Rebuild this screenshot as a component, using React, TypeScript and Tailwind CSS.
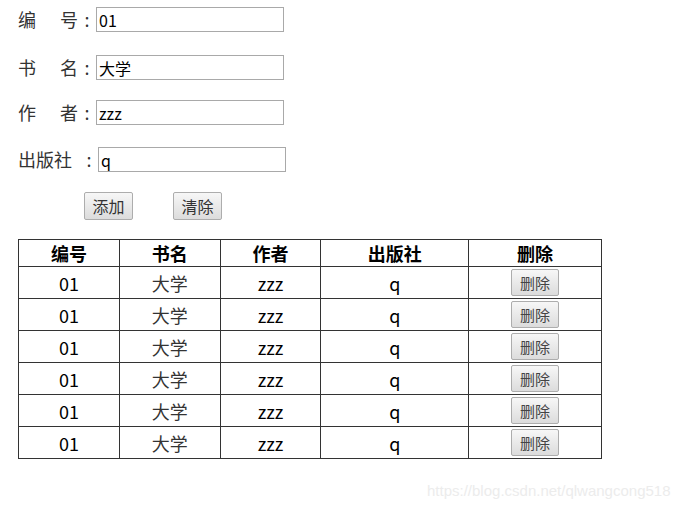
import React from 'react';

const rows = Array.from({ length: 6 }, () => ({ id: '01', name: '大学', author: 'zzz', press: 'q' }));

const cjk = "font-['Microsoft_YaHei','Noto_Sans_CJK_SC',sans-serif]";

function GreyButton({ children, className = '' }: { children: React.ReactNode; className?: string }) {
  return (
    <button
      className={`flex items-center justify-center border border-[#adadad] rounded-[2px] bg-gradient-to-b from-[#f7f7f7] to-[#dcdcdc] text-[#333] ${cjk} ${className}`}
    >
      {children}
    </button>
  );
}

function Field({ label, value }: { label: React.ReactNode; value: string }) {
  return (
    <div className="flex items-center h-[25px]">
      {label}
      <input
        readOnly
        value={value}
        className={`h-[25px] w-[188px] border border-[#a9a9a9] px-[2px] text-[16px] text-black ${cjk} outline-none`}
      />
    </div>
  );
}

// label laid out as: first char ... second char, then a colon
function Label({ a, b, width }: { a: string; b: string; width: string }) {
  return (
    <span className={`flex items-center text-[18px] text-[#333] ${width}`}>
      <span>{a}</span>
      <span className="ml-auto">{b}</span>
      <span className="w-[18px] text-center">:</span>
    </span>
  );
}

export default function App() {
  return (
    <div className={`relative w-[681px] h-[510px] bg-white ${cjk} text-[#222]`}>
      <div className="pl-[18px] pt-[7px] flex flex-col">
        <Field value="01" label={<Label a="编" b="号" width="w-[78px]" />} />
        <div className="mt-[23px]">
          <Field value="大学" label={<Label a="书" b="名" width="w-[78px]" />} />
        </div>
        <div className="mt-[20px]">
          <Field value="zzz" label={<Label a="作" b="者" width="w-[78px]" />} />
        </div>
        <div className="mt-[22px]">
          <Field value="q" label={<Label a="出版社" b="" width="w-[80px]" />} />
        </div>
        <div className="mt-[20px] flex pl-[66px] gap-[40px]">
          <GreyButton className="w-[49px] h-[28px] text-[16px]">添加</GreyButton>
          <GreyButton className="w-[49px] h-[28px] text-[16px]">清除</GreyButton>
        </div>
        <table className="mt-[19px] w-[584px] border-collapse border border-[#333] text-[18px] text-black">
          <thead>
            <tr className="h-[27px]">
              <th className="w-[101px] border border-[#333] font-bold leading-none">编号</th>
              <th className="w-[101px] border border-[#333] font-bold leading-none">书名</th>
              <th className="w-[101px] border border-[#333] font-bold leading-none">作者</th>
              <th className="w-[148px] border border-[#333] font-bold leading-none">出版社</th>
              <th className="w-[133px] border border-[#333] font-bold leading-none">删除</th>
            </tr>
          </thead>
          <tbody>
            {rows.map((r, i) => (
              <tr key={i} className="h-[32px]">
                <td className="border border-[#333] text-center leading-none">{r.id}</td>
                <td className="border border-[#333] text-center leading-none text-[#333]">{r.name}</td>
                <td className="border border-[#333] text-center leading-none">{r.author}</td>
                <td className="border border-[#333] text-center leading-none">{r.press}</td>
                <td className="border border-[#333] leading-none">
                  <div className="flex justify-center">
                    <GreyButton className="w-[48px] h-[27px] text-[15px] text-[#444]">删除</GreyButton>
                  </div>
                </td>
              </tr>
            ))}
          </tbody>
        </table>
      </div>
      <div className="absolute left-[427px] top-[480px] text-[15px] text-[#ececec] font-['Liberation_Sans',Arial,sans-serif]">
        https://blog.csdn.net/qlwangcong518
      </div>
    </div>
  );
}
